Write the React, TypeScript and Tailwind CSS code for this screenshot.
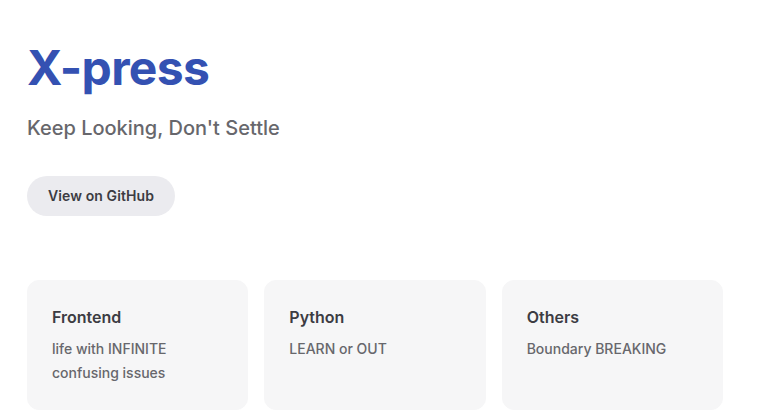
import React from 'react';

const features = [
    { title: 'Frontend', details: 'life with INFINITE confusing issues' },
    { title: 'Python', details: 'LEARN or OUT' },
    { title: 'Others', details: 'Boundary BREAKING' },
];

export default function App() {
    return (
        <div className="min-h-[417px] bg-white font-['Inter',sans-serif] px-[27px]">
            <div className="pt-[40px] max-w-[696px]">
                <h1 className="text-[48px] leading-[56px] font-bold tracking-[-0.7px] text-[#3451b2]">X-press</h1>
                <p className="pt-4 text-[20px] leading-[32px] font-medium text-[#67676c]">Keep Looking, Don't Settle</p>
                <div className="pt-8 flex">
                    <a
                        href="#"
                        className="inline-block rounded-[20px] bg-[#ebebef] px-[21px] text-[14px] leading-[40px] font-semibold tracking-[0.1px] text-[#3c3c43]"
                    >
                        View on GitHub
                    </a>
                </div>
            </div>
            <div className="mt-16 grid grid-cols-3 gap-4 w-[696px]">
                {features.map((f) => (
                    <div key={f.title} className="rounded-xl border border-[#f6f6f7] bg-[#f6f6f7] p-6">
                        <h2 className="text-[16px] leading-6 font-semibold text-[#3c3c43]">{f.title}</h2>
                        <p className="pt-2 text-[14px] leading-6 font-medium text-[#67676c]">{f.details}</p>
                    </div>
                ))}
            </div>
        </div>
    );
}
